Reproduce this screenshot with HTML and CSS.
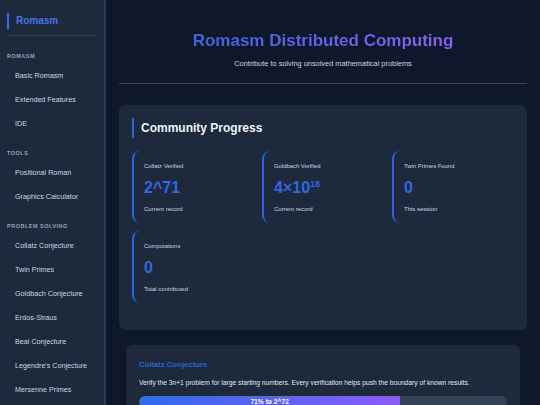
FILE: index.html
```html
<!DOCTYPE html>
<html lang="en">
<head>
<meta charset="utf-8">
<title>Romasm Distributed Computing</title>
<link rel="stylesheet" href="styles.css">
</head>
<body>
<aside class="sidebar">
  <div class="brand"><span class="brand-name">Romasm</span></div>
  <nav class="nav-section">
    <div class="nav-title">Romasm</div>
    <a class="nav-item">Basic Romasm</a>
    <a class="nav-item">Extended Features</a>
    <a class="nav-item">IDE</a>
  </nav>
  <nav class="nav-section">
    <div class="nav-title">Tools</div>
    <a class="nav-item">Positional Roman</a>
    <a class="nav-item">Graphics Calculator</a>
  </nav>
  <nav class="nav-section">
    <div class="nav-title">Problem Solving</div>
    <a class="nav-item">Collatz Conjecture</a>
    <a class="nav-item">Twin Primes</a>
    <a class="nav-item">Goldbach Conjecture</a>
    <a class="nav-item">Erdos-Straus</a>
    <a class="nav-item">Beal Conjecture</a>
    <a class="nav-item">Legendre's Conjecture</a>
    <a class="nav-item">Mersenne Primes</a>
  </nav>
</aside>
<main class="main">
  <header class="page-header">
    <h1 class="page-title">Romasm Distributed Computing</h1>
    <p class="page-subtitle">Contribute to solving unsolved mathematical problems</p>
  </header>
  <section class="panel">
    <h2 class="panel-title">Community Progress</h2>
    <div class="stats">
      <div class="stat">
        <div class="stat-label">Collatz Verified</div>
        <div class="stat-value">2^71</div>
        <div class="stat-sub">Current record</div>
      </div>
      <div class="stat">
        <div class="stat-label">Goldbach Verified</div>
        <div class="stat-value">4×10<sup class="exp">18</sup></div>
        <div class="stat-sub">Current record</div>
      </div>
      <div class="stat">
        <div class="stat-label">Twin Primes Found</div>
        <div class="stat-value">0</div>
        <div class="stat-sub">This session</div>
      </div>
      <div class="stat">
        <div class="stat-label">Computations</div>
        <div class="stat-value">0</div>
        <div class="stat-sub">Total contributed</div>
      </div>
    </div>
  </section>
  <section class="problem">
    <h3 class="problem-title">Collatz Conjecture</h3>
    <p class="problem-desc">Verify the 3n+1 problem for large starting numbers. Every verification helps push the boundary of known results.</p>
    <div class="progress"><div class="progress-fill" style="width:71%">71% to 2^72</div></div>
  </section>
</main>
</body>
</html>
```

FILE: styles.css
```css
html, body {
  margin: 0;
  padding: 0;
  height: 405px;
  overflow: hidden;
}
body {
  display: flex;
  background: #0f172a;
  font-family: "Liberation Sans", Arial, sans-serif;
  color: #e2e8f0;
}
.sidebar {
  width: 106px;
  flex: 0 0 106px;
  box-sizing: border-box;
  padding: 0 7px;
  background: #1e293b;
  border-right: 2px solid #2c3a50;
  height: 405px;
  overflow: hidden;
}
.brand {
  padding: 13px 0 6px;
  border-bottom: 1px solid #3a475b;
}
.brand-name {
  display: block;
  border-left: 2px solid #3b6ee6;
  padding-left: 7px;
  line-height: 16px;
  font-size: 10px;
  font-weight: bold;
  color: #4a72e6;
}
.nav-section {
  display: flex;
  flex-direction: column;
  margin-top: 13px;
}
.nav-section:first-of-type {
  margin-top: 16px;
}
.nav-title {
  font-size: 5.5px;
  line-height: 8px;
  font-weight: bold;
  letter-spacing: 0.5px;
  text-transform: uppercase;
  color: #94a3b8;
  margin-bottom: 4px;
}
.nav-item {
  display: block;
  font-size: 7.2px;
  line-height: 8px;
  padding: 8px 8px;
  color: #cbd5e1;
  white-space: nowrap;
}
.main {
  flex: 1;
  padding: 0 13px;
  min-width: 0;
}
.page-header {
  text-align: center;
  padding: 31px 0 15px;
  border-bottom: 1px solid #334155;
}
.page-title {
  margin: 0;
  font-size: 17px;
  line-height: 20px;
  font-weight: bold;
  background: linear-gradient(90deg, #3d63df, #8a5ff0);
  -webkit-background-clip: text;
  background-clip: text;
  color: transparent;
  display: inline-block;
}
.page-subtitle {
  margin: 8px 0 0;
  font-size: 7.4px;
  line-height: 9px;
  color: #cbd5e1;
}
.panel {
  margin-top: 21px;
  background: #1e293b;
  border-radius: 6px;
  padding: 13px 13px 27px;
}
.panel-title {
  margin: 0 0 13px;
  border-left: 2px solid #2d62de;
  padding-left: 7px;
  font-size: 12px;
  line-height: 20px;
  font-weight: bold;
  color: #eef2f7;
}
.stats {
  display: grid;
  grid-template-columns: repeat(3, 1fr);
  gap: 8px;
}
.stat {
  height: 72px;
  box-sizing: border-box;
  padding: 11px 10px 10px;
  border-left: 2px solid #2d62de;
  border-radius: 8px;
}
.stat-label {
  font-size: 5.9px;
  line-height: 8px;
  color: #cbd5e1;
}
.stat-value {
  margin-top: 8px;
  font-size: 16px;
  line-height: 20px;
  font-weight: bold;
  color: #2f68e3;
}
.exp {
  font-size: 9px;
  line-height: 0;
  vertical-align: 6px;
}
.stat-sub {
  margin-top: 7px;
  font-size: 6px;
  line-height: 8px;
  color: #cbd5e1;
}
.problem {
  margin: 15px 7px 0;
  background: #1e293b;
  border-radius: 6px;
  padding: 15px 13px;
}
.problem-title {
  margin: 0;
  font-size: 7.8px;
  line-height: 10px;
  font-weight: bold;
  color: #2b62dc;
}
.problem-desc {
  margin: 9px 0 0;
  font-size: 6.7px;
  line-height: 8px;
  color: #e2e8f0;
  white-space: nowrap;
}
.progress {
  margin-top: 9px;
  height: 12px;
  background: #334155;
  border-radius: 6px;
  overflow: hidden;
}
.progress-fill {
  height: 12px;
  background: linear-gradient(90deg, #2f6be8, #8b5cf6);
  color: #ffffff;
  font-size: 6.7px;
  line-height: 12px;
  font-weight: bold;
  text-align: center;
  border-radius: 6px 0 0 6px;
}
```
